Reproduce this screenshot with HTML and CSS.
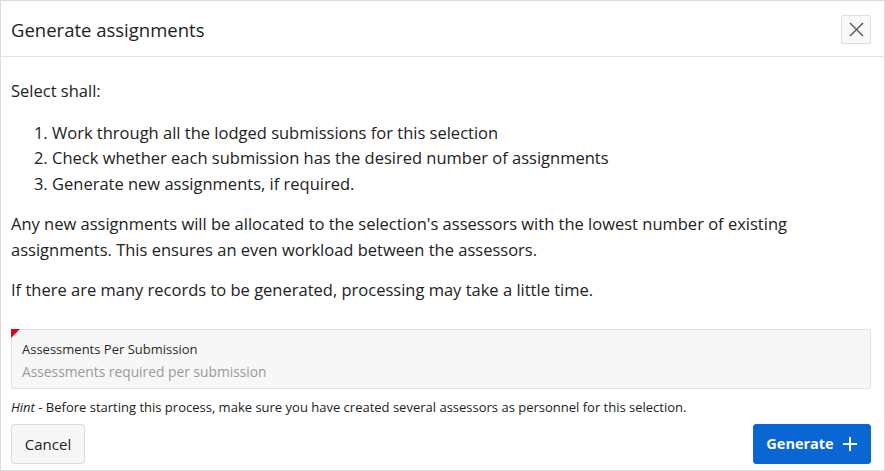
FILE: index.html
```html
<!DOCTYPE html>
<html lang="en">
<head>
<meta charset="utf-8">
<title>Generate assignments</title>
<link rel="stylesheet" href="styles.css">
</head>
<body>
<div class="dialog">
  <header class="dialog-header">
    <h1 class="dialog-title">Generate assignments</h1>
    <button class="close-btn" aria-label="Close">
      <svg width="15" height="15" viewBox="0 0 15 15"><path d="M1 1L14 14M14 1L1 14" stroke="#555" stroke-width="1.4" fill="none"/></svg>
    </button>
  </header>
  <main class="dialog-body">
    <p class="intro">Select shall:</p>
    <ol class="steps">
      <li>Work through all the lodged submissions for this selection</li>
      <li>Check whether each submission has the desired number of assignments</li>
      <li>Generate new assignments, if required.</li>
    </ol>
    <p class="para">Any new assignments will be allocated to the selection's assessors with the lowest number of existing assignments. This ensures an even workload between the assessors.</p>
    <p class="para para-last">If there are many records to be generated, processing may take a little time.</p>
    <div class="field">
      <span class="required-mark"></span>
      <label class="field-label">Assessments Per Submission</label>
      <div class="field-input">Assessments required per submission</div>
    </div>
    <p class="hint"><em>Hint</em> - Before starting this process, make sure you have created several assessors as personnel for this selection.</p>
  </main>
  <footer class="dialog-footer">
    <button class="btn btn-cancel">Cancel</button>
    <button class="btn btn-primary">Generate
      <svg width="16" height="16" viewBox="0 0 16 16"><path d="M8 1V15M1 8H15" stroke="#fff" stroke-width="2" fill="none"/></svg>
    </button>
  </footer>
</div>
</body>
</html>
```

FILE: styles.css
```css
* { box-sizing: border-box; }
html, body { margin: 0; padding: 0; background: #fff; }
body {
  font-family: "Open Sans", "Noto Sans", sans-serif;
  color: #222;
}
.dialog {
  width: 885px;
  height: 471px;
  border: 1px solid #dcdcdc;
  display: flex;
  flex-direction: column;
}
.dialog-header {
  height: 56px;
  border-bottom: 1px solid #e2e2e2;
  display: flex;
  align-items: center;
  justify-content: space-between;
  padding: 0 13px 0 10px;
  flex: none;
}
.dialog-title {
  margin: 0;
  font-size: 18.5px;
  font-weight: 400;
  color: #222;
  position: relative;
  top: 1px;
}
.close-btn {
  width: 30px;
  height: 29px;
  border: 1px solid #dedede;
  border-radius: 2px;
  background: #f8f8f8;
  display: flex;
  align-items: center;
  justify-content: center;
  padding: 0;
  margin-top: 1px;
}
.dialog-body {
  padding: 21px 13px 0 10px;
  font-size: 16.5px;
  line-height: 25.5px;
}
.intro { margin: 0 0 16px; }
.steps { margin: 0 0 15px; padding-left: 41px; }
.para { margin: 0 0 15px; }
.para-last { margin-bottom: 26px; }
.field {
  position: relative;
  height: 60px;
  background: #f7f7f7;
  border: 1px solid #e0e0e0;
  border-radius: 2px;
  padding: 10px 10px 0 10px;
}
.required-mark {
  position: absolute;
  left: -1px;
  top: -1px;
  width: 0;
  height: 0;
  border-top: 9px solid #e5001a;
  border-right: 9px solid transparent;
}
.field-label {
  display: block;
  font-size: 13px;
  line-height: 18px;
  color: #2a2a2a;
}
.field-input {
  font-size: 13.8px;
  line-height: 24px;
  margin-top: 2px;
  color: #9a9a9a;
}
.hint {
  margin: 10px 0 0;
  font-size: 13px;
  line-height: 16px;
  color: #222;
}
.dialog-footer {
  display: flex;
  justify-content: space-between;
  padding: 9px 13px 0 10px;
}
.btn {
  height: 40px;
  border-radius: 3px;
  font-family: inherit;
  font-size: 15px;
  display: flex;
  align-items: center;
  justify-content: center;
  cursor: pointer;
}
.btn-cancel {
  width: 74px;
  background: #f6f6f6;
  border: 1px solid #dcdcdc;
  color: #222;
}
.btn-primary {
  width: 118px;
  background: #0a66d2;
  border: 1px solid #0a66d2;
  color: #fff;
  font-weight: 700;
  font-size: 14.5px;
  gap: 8px;
}
```
